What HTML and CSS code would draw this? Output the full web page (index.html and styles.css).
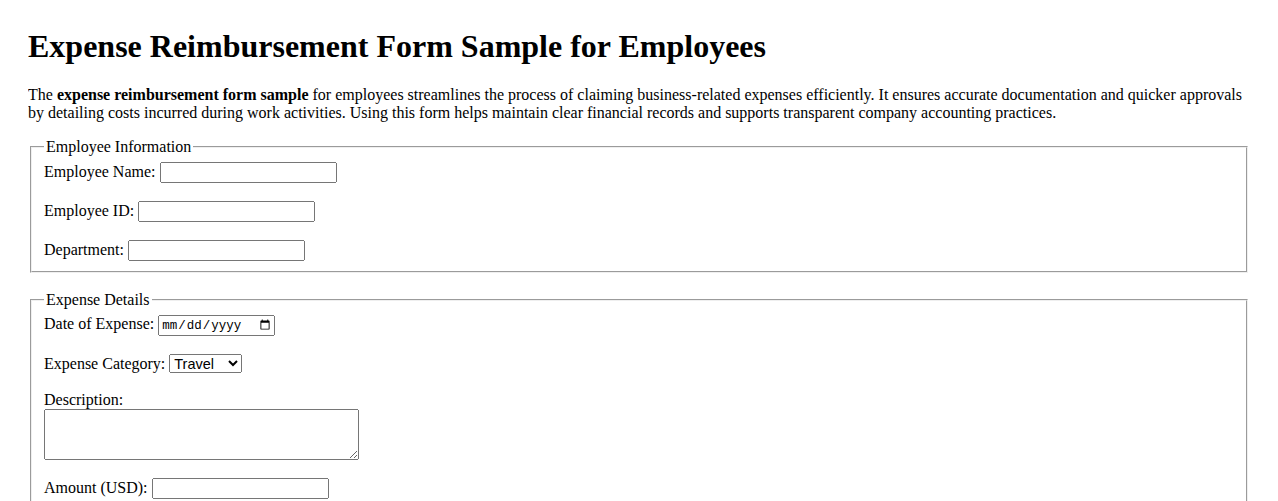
FILE: index.html
```html
<!DOCTYPE html>
<html>
<head>
  <title>Expense Reimbursement Form Sample for Employees</title>
  <link rel="stylesheet" href="styles.css">
</head>
<body>
  <h1>Expense Reimbursement Form Sample for Employees</h1>
  <p>The <strong>expense reimbursement form sample</strong> for employees streamlines the process of claiming business-related expenses efficiently. It ensures accurate documentation and quicker approvals by detailing costs incurred during work activities. Using this form helps maintain clear financial records and supports transparent company accounting practices.</p>

  <form class="expense-form">
    <fieldset>
      <legend>Employee Information</legend>
      <label for="empName">Employee Name:</label>
      <input type="text" id="empName" name="empName"><br><br>
      <label for="empId">Employee ID:</label>
      <input type="text" id="empId" name="empId"><br><br>
      <label for="dept">Department:</label>
      <input type="text" id="dept" name="dept">
    </fieldset>
    <br>
    <fieldset>
      <legend>Expense Details</legend>
      <label for="expDate">Date of Expense:</label>
      <input type="date" id="expDate" name="expDate"><br><br>
      <label for="category">Expense Category:</label>
      <select id="category" name="category">
        <option>Travel</option>
        <option>Meals</option>
        <option>Lodging</option>
        <option>Supplies</option>
        <option>Other</option>
      </select><br><br>
      <label for="desc">Description:</label><br>
      <textarea id="desc" name="desc" rows="3" cols="40"></textarea><br><br>
      <label for="amount">Amount (USD):</label>
      <input type="number" id="amount" name="amount" step="0.01"><br><br>
      <label for="receipt">Receipt:</label>
      <input type="file" id="receipt" name="receipt">
    </fieldset>
  </form>
</body>
</html>
```

FILE: styles.css
```css
body {
  margin: 28px;
  font-family: 'Liberation Serif', 'Times New Roman', serif;
  color: #000;
  background: #fff;
}
h1 { font-size: 32px; margin-top: 0; }

input, select, textarea {
  font-family: 'Liberation Sans', Arial, sans-serif;
  font-size: 13.33px;
  box-sizing: border-box;
}
input[type="text"], input[type="number"] {
  width: 177px;
  height: 21px;
}
input[type="date"] {
  font-family: 'Liberation Mono', monospace;
  font-size: 12.5px;
  width: 117px;
  height: 21px;
}
select {
  width: 73px;
  height: 19px;
  font-size: 14.5px;
}
textarea {
  width: 315px;
  height: 51px;
  vertical-align: bottom;
}
```
